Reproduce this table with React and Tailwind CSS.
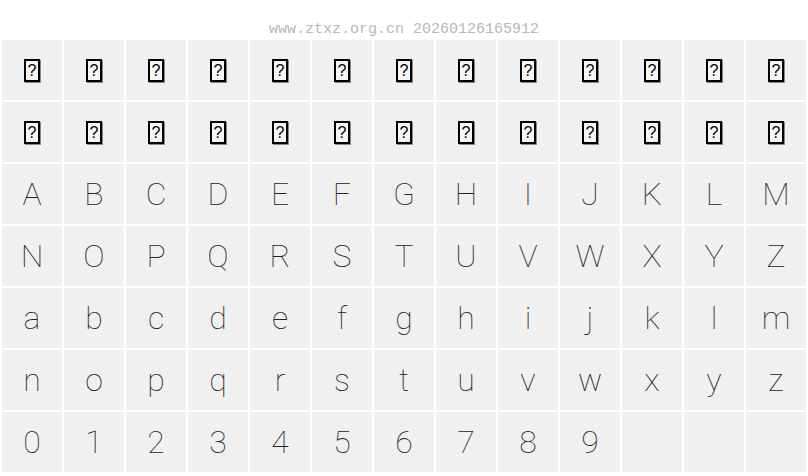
import React from "react";

const upper = "ABCDEFGHIJKLM NOPQRSTUVWXYZ".split(" ");
const lower = ["abcdefghijklm", "nopqrstuvwxyz"];

function Tofu() {
  return (
    <span className="inline-flex w-[16px] h-[23px] items-center justify-center border-2 border-black bg-[#f6f6f6] shadow-[1px_1px_0_#888] text-[16px] leading-none text-black font-['Liberation_Sans',sans-serif] mt-[1px]">
      ?
    </span>
  );
}

function Cell({ children }) {
  return (
    <div className="w-[60px] h-[60px] bg-[#f0f0f0] flex items-center justify-center">
      {children}
    </div>
  );
}

export default function App() {
  const rows = [];
  rows.push(Array.from({ length: 13 }, () => <Tofu />));
  rows.push(Array.from({ length: 13 }, () => <Tofu />));
  rows.push(upper[0].split(""));
  rows.push(upper[1].split(""));
  rows.push(lower[0].split(""));
  rows.push(lower[1].split(""));
  rows.push([..."0123456789".split(""), "", "", ""]);

  return (
    <div className="w-[808px] h-[476px] bg-white overflow-hidden antialiased">
      <div className="h-[40px] flex items-end justify-center pb-[3px]">
        <span className="font-['Liberation_Mono',monospace] text-[15px] leading-[15px] text-[#b8b8b8]">
          www.ztxz.org.cn 20260126165912
        </span>
      </div>
      <div className="grid grid-cols-[repeat(13,60px)] gap-[2px] px-[2px] font-['Roboto',sans-serif] font-thin text-[32px] leading-none text-[#222]">
        {rows.flatMap((r, i) =>
          r.map((c, j) => <Cell key={i + "-" + j}>{c}</Cell>)
        )}
      </div>
    </div>
  );
}
